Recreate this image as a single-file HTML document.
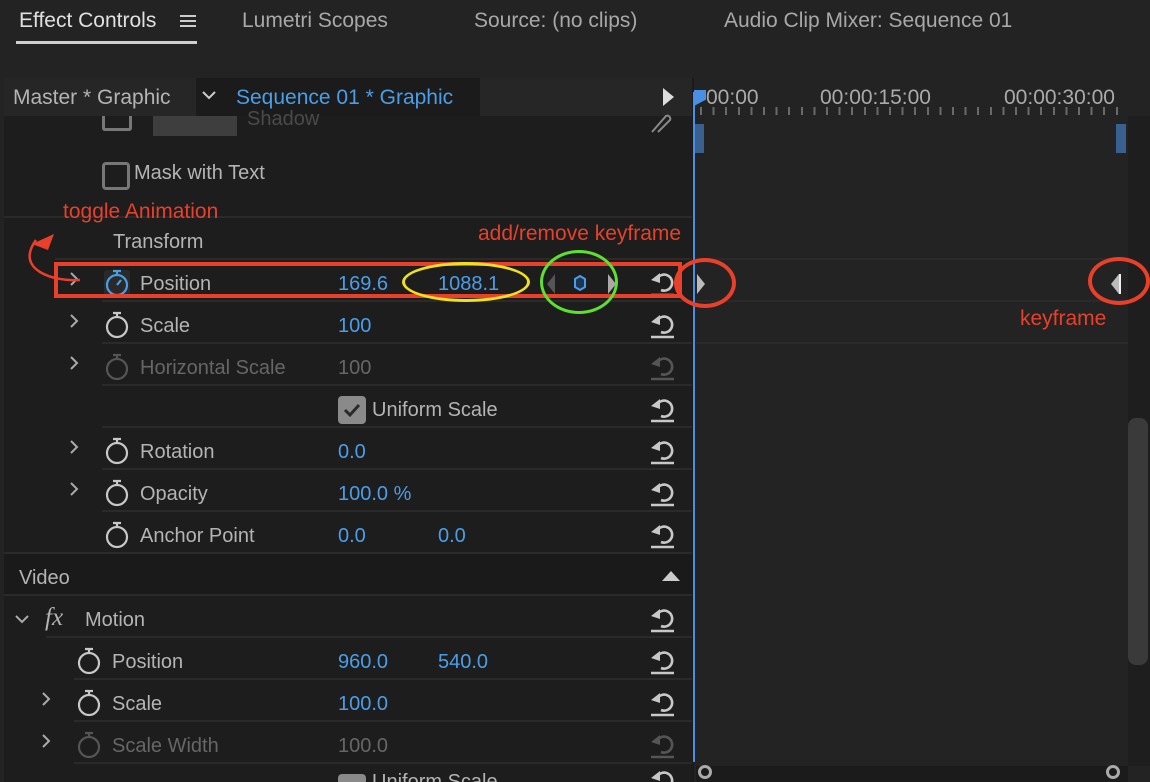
<!DOCTYPE html><html><head><style>
html,body{margin:0;width:1150px;height:782px;overflow:hidden}
body{background:#232323;font-family:"Liberation Sans",sans-serif;position:relative}
.a{position:absolute;white-space:nowrap}
.t{font-size:20px;color:#b4b4b4}
.b{color:#4a9ee8}
.d{color:#666}
.sep{position:absolute;height:2px;background:#2a2a2a}
.red{color:#e8402a;font-size:21px}
</style></head><body>
<div class="a t" style="left:19px;top:9px;color:#e0e0e0;font-size:21px">Effect Controls</div>
<div class="a" style="left:180px;top:15px;width:16px;height:2px;background:#ccc;box-shadow:0 5px 0 #ccc,0 10px 0 #ccc"></div>
<div class="a" style="left:16px;top:41px;width:181px;height:3px;background:#cfcfcf"></div>
<div class="a t" style="left:242px;top:9px;font-size:21px;color:#a8a8a8">Lumetri Scopes</div>
<div class="a t" style="left:474px;top:9px;font-size:21px;color:#a8a8a8">Source: (no clips)</div>
<div class="a t" style="left:724px;top:9px;font-size:21px;color:#a8a8a8">Audio Clip Mixer: Sequence 01</div>
<div class="a" style="left:4px;top:78px;width:688px;height:704px;background:#1d1d1d"></div>
<div class="a" style="left:4px;top:78px;width:688px;height:38px;background:#262626"></div>
<div class="a" style="left:196px;top:78px;width:284px;height:38px;background:#1b1b1b"></div>
<div class="a t" style="left:13px;top:86px;font-size:21px">Master * Graphic</div>
<svg class="a" style="left:202px;top:90px" width="14" height="10"><path d="M1 2l6 6 6-6" stroke="#ccc" stroke-width="2" fill="none"/></svg>
<div class="a t b" style="left:236px;top:86px;font-size:21px">Sequence 01 * Graphic</div>
<svg class="a" style="left:663px;top:88px" width="12" height="18"><path d="M0 0l11 9-11 9z" fill="#ddd"/></svg>
<div class="a" style="left:102px;top:116px;width:24px;height:12px;border:3px solid #777;border-top:none;border-radius:0 0 3px 3px"></div>
<div class="a" style="left:153px;top:116px;width:84px;height:20px;background:#3e3e3e"></div>
<div class="a t" style="left:247px;top:108px;color:#4a4a4a">Shadow</div>
<svg class="a" style="left:648px;top:110px" width="24" height="24"><path d="M4 22l14-16a3 3 0 0 1 4 4l-12 12" stroke="#888" stroke-width="2" fill="none"/></svg>
<div class="a" style="left:102px;top:162px;width:22px;height:22px;border:3px solid #777;border-radius:4px"></div>
<div class="a t" style="left:134px;top:162px">Mask with Text</div>
<div class="sep" style="left:4px;top:216px;width:688px"></div>
<div class="a t" style="left:113px;top:231px">Transform</div>
<div class="sep" style="left:55px;top:258px;width:637px"></div>
<div class="sep" style="left:102px;top:300px;width:590px"></div>
<div class="sep" style="left:102px;top:342px;width:590px"></div>
<div class="sep" style="left:102px;top:384px;width:590px"></div>
<div class="sep" style="left:102px;top:426px;width:590px"></div>
<div class="sep" style="left:102px;top:468px;width:590px"></div>
<div class="sep" style="left:102px;top:510px;width:590px"></div>
<div class="sep" style="left:4px;top:552px;width:688px"></div>
<div class="a" style="left:4px;top:554px;width:688px;height:40px;background:#1a1a1a"></div>
<div class="sep" style="left:4px;top:594px;width:688px"></div>
<div class="sep" style="left:46px;top:636px;width:646px"></div>
<div class="sep" style="left:74px;top:678px;width:618px"></div>
<div class="sep" style="left:74px;top:720px;width:618px"></div>
<div class="sep" style="left:74px;top:762px;width:618px"></div>

<div class="a" style="left:104px;top:270px;width:26px;height:28px;background:#2a2a2a;border-radius:3px"></div>
<div class="a t" style="left:140px;top:273px">Position</div>
<div class="a t b" style="left:338px;top:273px">169.6</div>
<div class="a t b" style="left:438px;top:273px">1088.1</div>
<div class="a t" style="left:140px;top:315px">Scale</div><div class="a t b" style="left:338px;top:315px">100</div>
<div class="a t d" style="left:140px;top:357px">Horizontal Scale</div><div class="a t d" style="left:338px;top:357px">100</div>
<div class="a" style="left:338px;top:396px;width:28px;height:28px;background:#8a8a8a;border-radius:4px"></div>
<svg class="a" style="left:342px;top:400px" width="20" height="20"><path d="M3 10l5 5 9-10" stroke="#2a2a2a" stroke-width="3" fill="none"/></svg>
<div class="a t" style="left:372px;top:399px">Uniform Scale</div>
<div class="a t" style="left:140px;top:441px">Rotation</div><div class="a t b" style="left:338px;top:441px">0.0</div>
<div class="a t" style="left:140px;top:483px">Opacity</div><div class="a t b" style="left:338px;top:483px">100.0 %</div>
<div class="a t" style="left:140px;top:525px">Anchor Point</div><div class="a t b" style="left:338px;top:525px">0.0</div><div class="a t b" style="left:438px;top:525px">0.0</div>
<div class="a t" style="left:19px;top:567px">Video</div>
<svg class="a" style="left:662px;top:570px" width="18" height="12"><path d="M0 11l9-10 9 10z" fill="#ccc"/></svg>
<svg class="a" style="left:15px;top:614px" width="14" height="10"><path d="M1 2l6 6 6-6" stroke="#aaa" stroke-width="2" fill="none"/></svg>
<div class="a t" style="left:45px;top:604px;font-style:italic;font-family:'Liberation Serif',serif;font-size:25px">fx</div>
<div class="a t" style="left:85px;top:609px">Motion</div>
<div class="a t" style="left:112px;top:651px">Position</div><div class="a t b" style="left:338px;top:651px">960.0</div><div class="a t b" style="left:438px;top:651px">540.0</div>
<div class="a t" style="left:112px;top:693px">Scale</div><div class="a t b" style="left:338px;top:693px">100.0</div>
<div class="a t d" style="left:112px;top:735px">Scale Width</div><div class="a t d" style="left:338px;top:735px">100.0</div>
<div class="a" style="left:338px;top:774px;width:28px;height:12px;background:#8a8a8a;border-radius:4px"></div>
<div class="a t" style="left:372px;top:771px">Uniform Scale</div>

<svg class="a" style="left:0;top:0" width="700" height="782">
<g stroke="#aaa" stroke-width="2" fill="none">
<path d="M71 273l6 6-6 6"/><path d="M71 315l6 6-6 6"/><path d="M71 357l6 6-6 6"/><path d="M71 441l6 6-6 6"/><path d="M71 483l6 6-6 6"/>
<path d="M43 693l6 6-6 6"/><path d="M43 735l6 6-6 6"/>
</g>
<g fill="none" stroke-width="2.2">
<g stroke="#4a9ee8"><circle cx="117" cy="285" r="10"/><path d="M113 271h8M117 271v4M117 285l4-5"/></g>
<g stroke="#c8c8c8"><circle cx="117" cy="327" r="10"/><path d="M113 313h8M117 313v4"/></g>
<g stroke="#555"><circle cx="117" cy="369" r="10"/><path d="M113 355h8M117 355v4"/></g>
<g stroke="#c8c8c8"><circle cx="117" cy="453" r="10"/><path d="M113 439h8M117 439v4"/>
<circle cx="117" cy="495" r="10"/><path d="M113 481h8M117 481v4"/>
<circle cx="117" cy="537" r="10"/><path d="M113 523h8M117 523v4"/>
<circle cx="89" cy="663" r="10"/><path d="M85 649h8M89 649v4"/>
<circle cx="89" cy="705" r="10"/><path d="M85 691h8M89 691v4"/></g>
<g stroke="#555"><circle cx="89" cy="747" r="10"/><path d="M85 733h8M89 733v4"/></g>
</g>
<path d="M555 274l-8 10 8 10z" fill="#555"/><path d="M608 274l8 10-8 10z" fill="#aaa"/>
<path d="M580 276l5 3v8l-5 3-5-3v-8z" fill="#1d3550" stroke="#4a9ee8" stroke-width="2"/>
</svg>
<div id="resets"></div>
<script>
var ys=[284,326,368,410,452,494,536,620,662,704,746,782];var dim=[368,746];var h='';
ys.forEach(function(y){var c=dim.indexOf(y)>=0?'#555':'#c8c8c8';h+='<svg class="a" style="left:648px;top:'+(y-16)+'px" width="30" height="32"><path d="M9 11A8 8 0 1 1 13 22" stroke="'+c+'" stroke-width="2.6" fill="none"/><path d="M3 12l9-7v10z" fill="'+c+'"/><path d="M3 27h23" stroke="'+c+'" stroke-width="2.4"/></svg>'});
document.getElementById('resets').innerHTML=h;
</script>
<div class="a" style="left:692px;top:78px;width:2px;height:704px;background:#1a1a1a"></div>
<div class="a" style="left:693px;top:92px;width:2px;height:670px;background:#4a90e2"></div>
<div class="a" style="left:694px;top:90px;width:12px;height:16px;background:#4a90e2;clip-path:polygon(0 0,100% 0,100% 60%,0 100%)"></div>
<div class="a t" style="left:706px;top:86px;color:#aaa;font-size:21px">00:00</div>
<div class="a t" style="left:820px;top:86px;color:#aaa;font-size:21px">00:00:15:00</div>
<div class="a t" style="left:1004px;top:86px;color:#aaa;font-size:21px">00:00:30:00</div>
<div class="a" style="left:700px;top:107px;width:428px;height:8px;background:repeating-linear-gradient(90deg,#6a6a6a 0 2px,transparent 2px 12.6px)"></div>
<div class="a" style="left:695px;top:124px;width:9px;height:29px;background:#3a6090"></div>
<div class="a" style="left:1116px;top:124px;width:10px;height:29px;background:#3a6090"></div>
<div class="a" style="left:1128px;top:116px;width:22px;height:650px;background:#1e1e1e"></div>
<div class="a" style="left:1128px;top:418px;width:20px;height:247px;background:#3a3a3a;border-radius:8px"></div>
<div class="a" style="left:696px;top:766px;width:432px;height:16px;background:#1b1b1b"></div>
<div class="a" style="left:698px;top:765px;width:14px;height:14px;border:3px solid #aaa;border-radius:50%;box-sizing:border-box"></div>
<div class="a" style="left:1106px;top:765px;width:14px;height:14px;border:3px solid #aaa;border-radius:50%;box-sizing:border-box"></div>
<div class="sep" style="left:696px;top:258px;width:432px"></div>
<div class="sep" style="left:696px;top:300px;width:432px"></div>
<div class="sep" style="left:696px;top:342px;width:432px"></div>
<svg class="a" style="left:696px;top:274px" width="12" height="20"><path d="M1 0l8 10-8 10z" fill="#bbb"/></svg>
<svg class="a" style="left:1110px;top:274px" width="12" height="20"><path d="M9 0l-8 10 8 10z" fill="#bbb"/><path d="M10 0v20" stroke="#eee" stroke-width="2"/></svg>
<div class="a" style="left:54px;top:262px;width:628px;height:36px;border:4px solid #e8402a;box-sizing:border-box"></div>
<div class="a" style="left:402px;top:262px;width:128px;height:40px;border:3px solid #f0e020;border-radius:50%;box-sizing:border-box"></div>
<div class="a" style="left:540px;top:250px;width:78px;height:64px;border:3px solid #5ee030;border-radius:50%;box-sizing:border-box"></div>
<div class="a" style="left:674px;top:258px;width:62px;height:50px;border:4px solid #e8402a;border-radius:50%;box-sizing:border-box"></div>
<div class="a" style="left:1088px;top:257px;width:62px;height:48px;border:4px solid #e8402a;border-radius:50%;box-sizing:border-box"></div>
<div class="a red" style="left:63px;top:200px">toggle Animation</div>
<div class="a red" style="left:478px;top:222px">add/remove keyframe</div>
<div class="a red" style="left:1020px;top:307px">keyframe</div>
<svg class="a" style="left:14px;top:218px" width="80" height="70"><path d="M66 62C40 64 0 52 22 22" stroke="#e8402a" stroke-width="2.5" fill="none"/><path d="M18 26l22-10-6 16z" fill="#e8402a"/></svg>
</body></html>
